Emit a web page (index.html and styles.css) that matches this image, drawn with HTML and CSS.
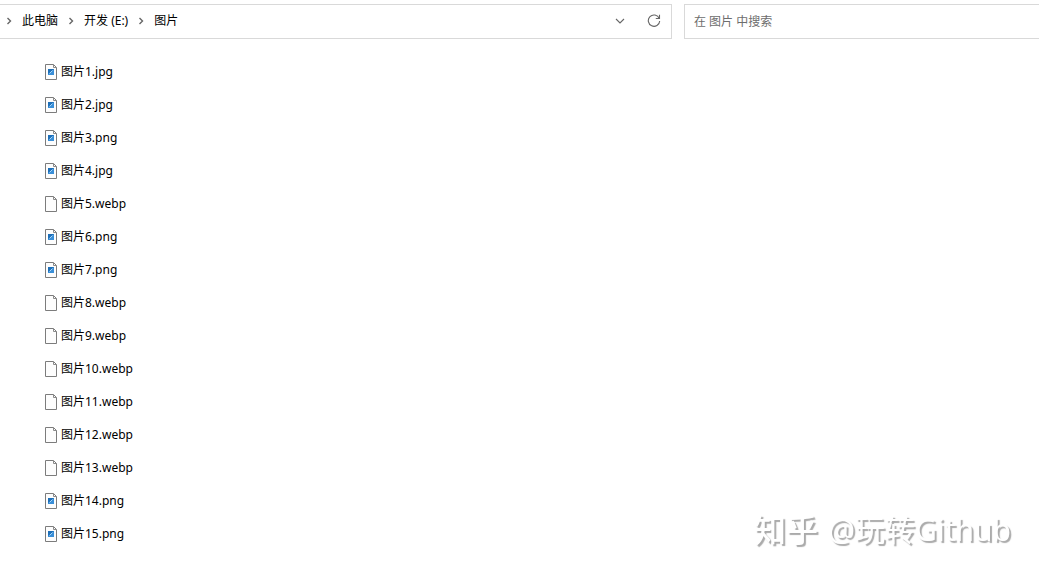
FILE: index.html
```html
<!DOCTYPE html>
<html lang="zh-CN">
<head>
    <meta charset="UTF-8">
    <meta name="viewport" content="width=device-width, initial-scale=1.0">
    <title>图片</title>
    <link rel="stylesheet" href="styles.css">
</head>
<body>
    <svg class="symbols" aria-hidden="true">
        <symbol id="chevron" viewBox="0 0 6 8">
            <path d="M1.5 1 4.5 4 1.5 7" fill="none" stroke="#666" stroke-width="1.4"/>
        </symbol>
        <symbol id="file" viewBox="0 0 12 16">
            <path d="M.5.5H8.5L11.5 3.5V15.5H.5Z" fill="#fdfdfd" stroke="#7c7c7c"/>
            <path d="M8.5.5V3.5H11.5" fill="none" stroke="#8a8a8a"/>
        </symbol>
        <symbol id="image" viewBox="0 0 12 16">
            <use href="#file"/>
            <path d="M3 5H9V11H3Z" fill="#3a8fd8"/>
            <path d="M3 5H9L3 10Z" fill="#1e6fb8"/>
            <path d="M4.5 9.5 7.5 6.5" stroke="#a9d6f7"/>
        </symbol>
    </svg>

    <header class="toolbar">
        <nav class="address">
            <svg class="chevron"><use href="#chevron"/></svg>
            <a href="#">此电脑</a>
            <svg class="chevron"><use href="#chevron"/></svg>
            <a href="#">开发 (E:)</a>
            <svg class="chevron"><use href="#chevron"/></svg>
            <a href="#">图片</a>
            <div class="actions">
                <button type="button" aria-label="历史记录">
                    <svg width="10" height="6" viewBox="0 0 10 6"><path d="M1 1 5 5 9 1" fill="none" stroke="#666" stroke-width="1.1"/></svg>
                </button>
                <button type="button" aria-label="刷新">
                    <svg width="14" height="14" viewBox="0 0 14 14"><path d="M12.2 4.3A5.7 5.7 0 1 0 12.7 7M12.5.8V4.5H8.8" fill="none" stroke="#666" stroke-width="1.1"/></svg>
                </button>
            </div>
        </nav>
        <input class="search" type="text" placeholder="在 图片 中搜索" aria-label="在 图片 中搜索">
    </header>

    <main>
        <ul class="files">
            <li><svg><use href="#image"/></svg><a href="#">图片1.jpg</a></li>
            <li><svg><use href="#image"/></svg><a href="#">图片2.jpg</a></li>
            <li><svg><use href="#image"/></svg><a href="#">图片3.png</a></li>
            <li><svg><use href="#image"/></svg><a href="#">图片4.jpg</a></li>
            <li><svg><use href="#file"/></svg><a href="#">图片5.webp</a></li>
            <li><svg><use href="#image"/></svg><a href="#">图片6.png</a></li>
            <li><svg><use href="#image"/></svg><a href="#">图片7.png</a></li>
            <li><svg><use href="#file"/></svg><a href="#">图片8.webp</a></li>
            <li><svg><use href="#file"/></svg><a href="#">图片9.webp</a></li>
            <li><svg><use href="#file"/></svg><a href="#">图片10.webp</a></li>
            <li><svg><use href="#file"/></svg><a href="#">图片11.webp</a></li>
            <li><svg><use href="#file"/></svg><a href="#">图片12.webp</a></li>
            <li><svg><use href="#file"/></svg><a href="#">图片13.webp</a></li>
            <li><svg><use href="#image"/></svg><a href="#">图片14.png</a></li>
            <li><svg><use href="#image"/></svg><a href="#">图片15.png</a></li>
        </ul>
    </main>

    <div class="watermark"><span class="brand">知乎</span><span>@玩转Github</span></div>
</body>
</html>
```

FILE: styles.css
```css
* {
    box-sizing: border-box;
}

body {
    margin: 0;
    font-family: "Noto Sans", "Noto Sans CJK SC", sans-serif;
    font-size: 12px;
    line-height: 16px;
    color: #000;
    background-color: #fff;
}

a {
    color: inherit;
    text-decoration: none;
}

.symbols {
    display: none;
}

/* 地址栏和搜索框 */
.toolbar {
    display: grid;
    grid-template-columns: 672fr 355fr;
    gap: 12px;
    padding-top: 4px;
}

.address {
    display: flex;
    align-items: center;
    gap: 10px;
    height: 35px;
    padding: 0 7px 1px 6px;
    border: 1px solid #d9d9d9;
    border-left: none;
}

.chevron {
    width: 6px;
    height: 8px;
}

.actions {
    display: flex;
    gap: 14px;
    margin-left: auto;
}

.actions button {
    display: flex;
    align-items: center;
    justify-content: center;
    width: 20px;
    height: 20px;
    padding: 0;
    border: none;
    background: none;
}

.search {
    min-width: 0;
    height: 35px;
    padding: 0 9px;
    border: 1px solid #d9d9d9;
    border-right: none;
    border-radius: 0;
    font: inherit;
    outline: none;
}

.search::placeholder {
    color: #6d6d6d;
}

/* 文件列表 */
.files {
    margin: 0;
    padding: 16px 0 0 45px;
    list-style: none;
}

.files li {
    display: flex;
    align-items: center;
    gap: 4px;
    height: 33px;
}

.files svg {
    width: 12px;
    height: 16px;
}

/* 水印 */
.watermark {
    position: fixed;
    right: 28px;
    bottom: 24px;
    display: flex;
    align-items: center;
    gap: 10px;
    font-size: 30px;
    line-height: 40px;
    color: #fff;
    text-shadow: 2px 2px 1px #aaa;
}

.brand {
    font-size: 32px;
    font-weight: 500;
}
```
